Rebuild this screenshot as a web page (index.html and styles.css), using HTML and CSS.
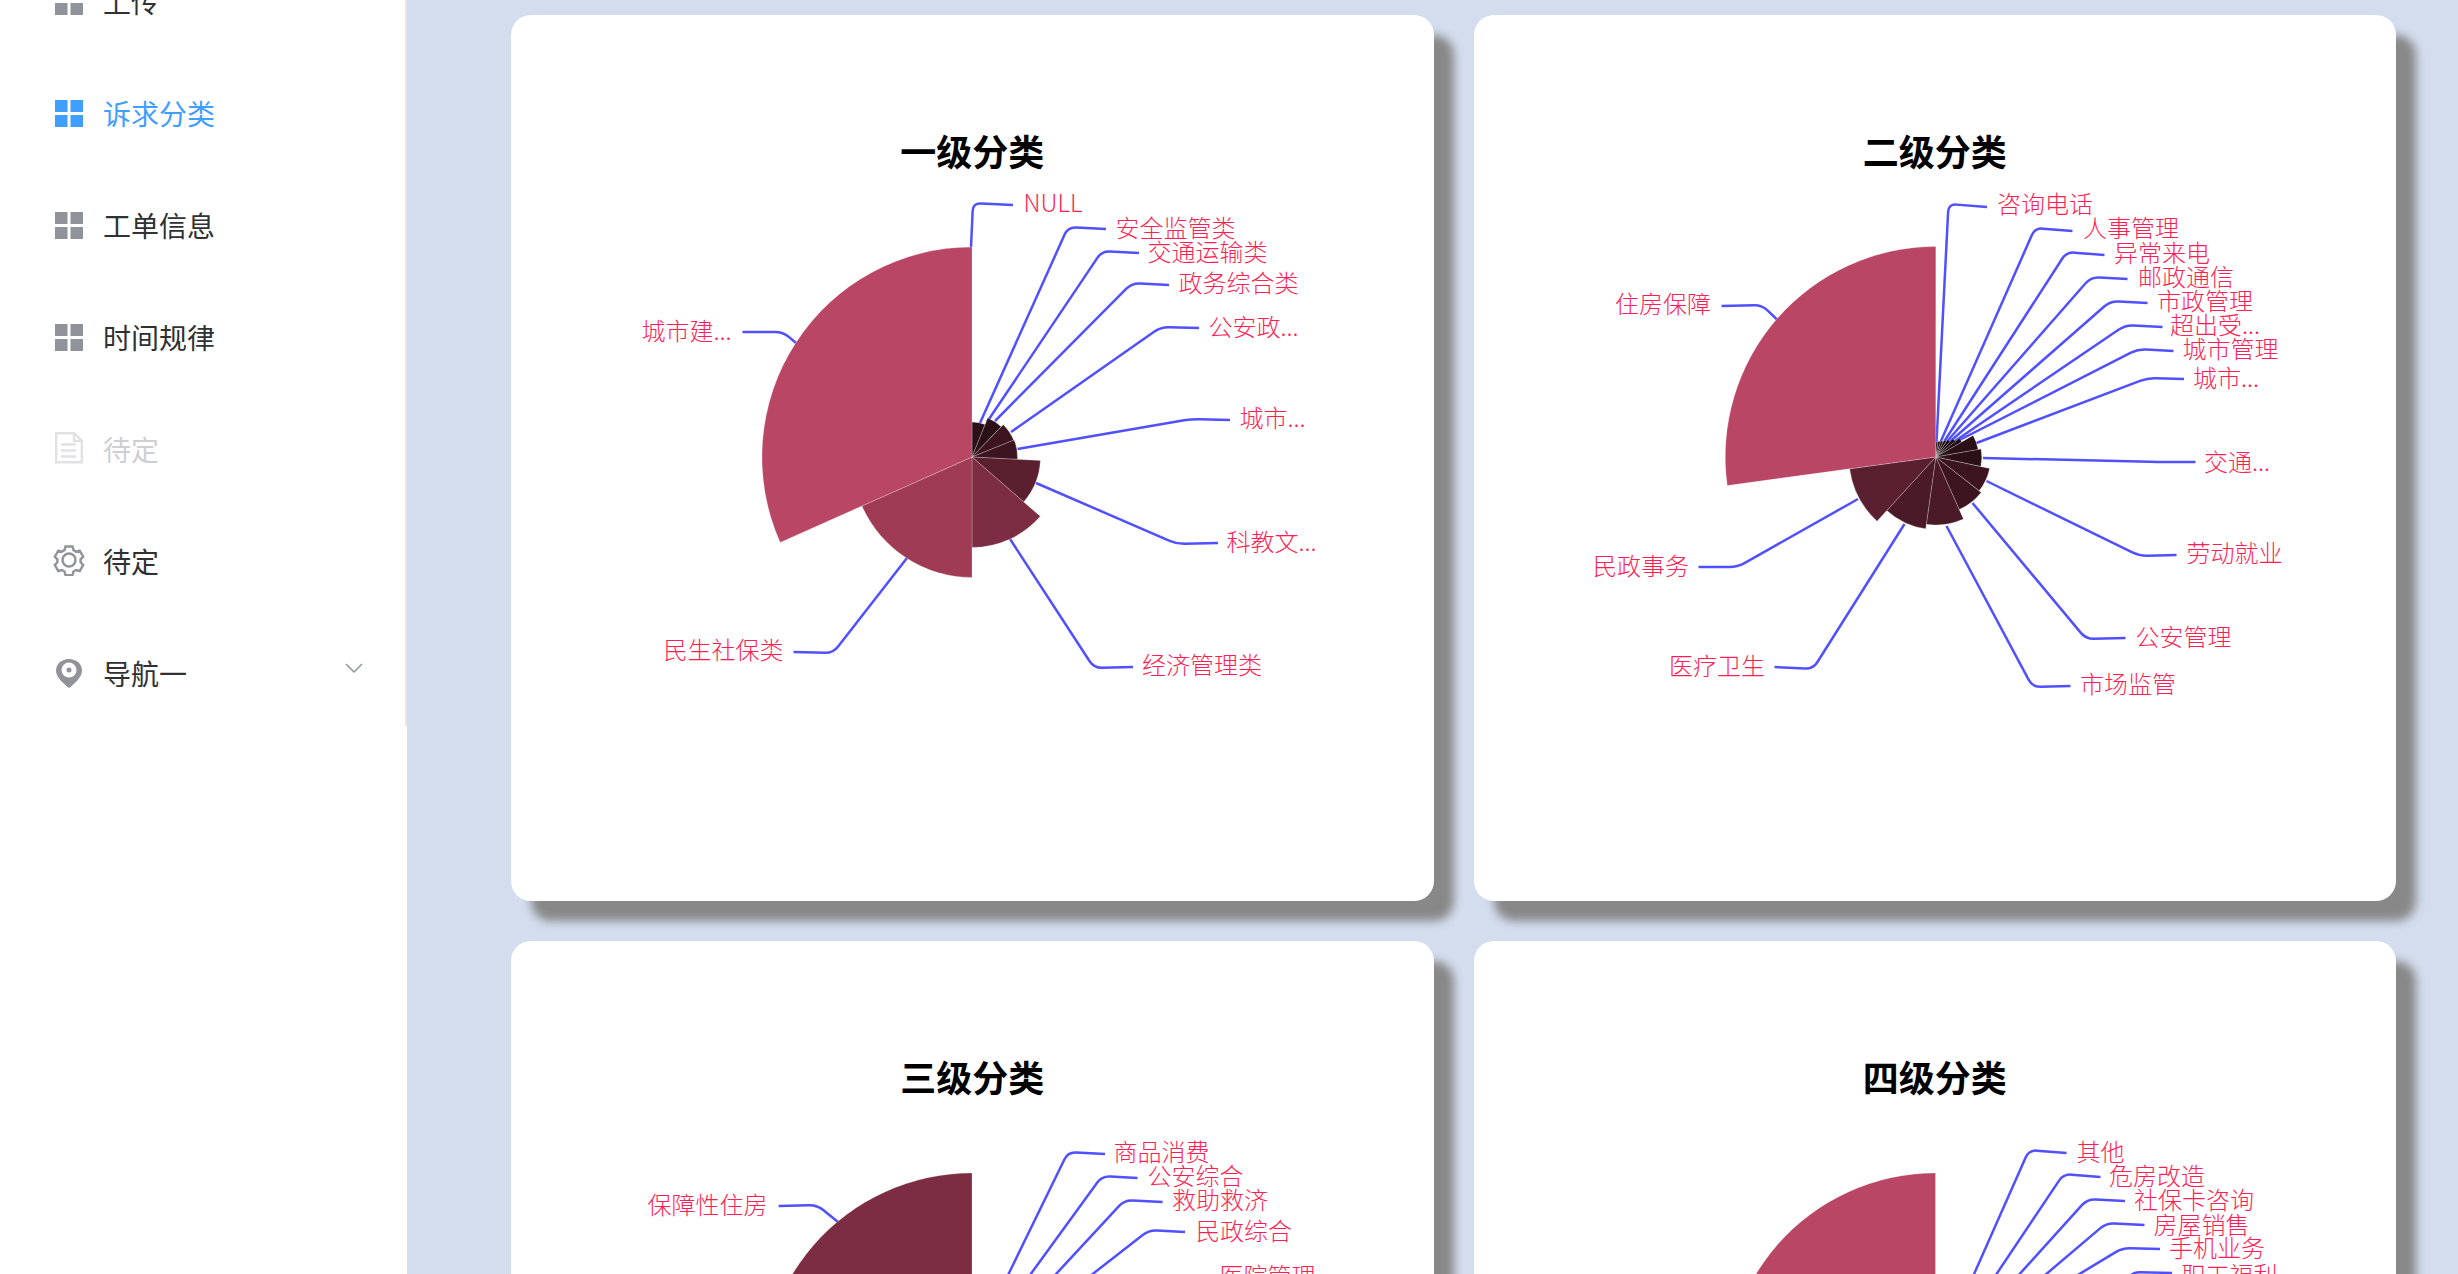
FILE: index.html
```html
<!DOCTYPE html>
<html>
  <head>
    <meta charset="utf-8">
    <title>诉求分类</title>
    <link rel="stylesheet" href="styles.css">
  </head>

  <body>

    <!--Side menu-->
    <aside class="aside">
      <ul class="menu">
        <li class="menuItem">
          <svg class="menuIcon" viewBox="0 0 28 28"><path d="M0 1h12.500v12h-12.500zM15.500 1h12.500v12h-12.500zM0 16h12.500v12h-12.500zM15.500 16h12.500v12h-12.500z"/></svg>
          <span>上传</span>
        </li>
        <li class="menuItem active">
          <svg class="menuIcon" viewBox="0 0 28 28"><path d="M0 1h12.500v12h-12.500zM15.500 1h12.500v12h-12.500zM0 16h12.500v12h-12.500zM15.500 16h12.500v12h-12.500z"/></svg>
          <span>诉求分类</span>
        </li>
        <li class="menuItem">
          <svg class="menuIcon" viewBox="0 0 28 28"><path d="M0 1h12.500v12h-12.500zM15.500 1h12.500v12h-12.500zM0 16h12.500v12h-12.500zM15.500 16h12.500v12h-12.500z"/></svg>
          <span>工单信息</span>
        </li>
        <li class="menuItem">
          <svg class="menuIcon" viewBox="0 0 28 28"><path d="M0 1h12.500v12h-12.500zM15.500 1h12.500v12h-12.500zM0 16h12.500v12h-12.500zM15.500 16h12.500v12h-12.500z"/></svg>
          <span>时间规律</span>
        </li>
        <li class="menuItem disabled">
          <svg class="menuIcon tall" viewBox="0 0 28 32"><path class="line" d="M1.200 1.200h18l7.600 7.600v21.500h-25.600zM19 1.200v7.800h7.800M6 12.500h15M6 18.500h15M6 24.500h15"/></svg>
          <span>待定</span>
        </li>
        <li class="menuItem">
          <svg class="menuIcon gear" viewBox="0 0 32 32"><path class="line" d="M12.500 2.500h7l1 3.600 2.600 1.500 3.600-1 3.500 6.100-2.600 2.600v3l2.600 2.600-3.500 6.100-3.600-1-2.600 1.500-1 3.600h-7l-1-3.600-2.600-1.500-3.600 1-3.500-6.100 2.600-2.600v-3l-2.600-2.600 3.500-6.100 3.600 1 2.600-1.500z"/><circle class="line" cx="16" cy="16" r="6.500"/></svg>
          <span>待定</span>
        </li>
        <li class="menuItem">
          <svg class="menuIcon pin" viewBox="0 0 28 32"><path d="M14 0C21.500 0 27 5 27 11.500 27 18.500 19 25 14 29 9 25 1 18.500 1 11.500 1 5 6.500 0 14 0z"/><circle class="hole" cx="14" cy="11" r="7.500"/><circle cx="14" cy="11" r="2.500"/></svg>
          <span>导航一</span>
          <svg class="chevron" viewBox="0 0 18 10"><path d="M1 1l8 8 8-8"/></svg>
        </li>
      </ul>
    </aside>
    <!---->

    <main class="main">
      <section class="card">
        <h3 class="cardTitle">一级分类</h3>
        <svg class="chart" id="chart1"></svg>
      </section>
      <section class="card">
        <h3 class="cardTitle">二级分类</h3>
        <svg class="chart" id="chart2"></svg>
      </section>
      <section class="card">
        <h3 class="cardTitle">三级分类</h3>
        <svg class="chart" id="chart3"></svg>
      </section>
      <section class="card">
        <h3 class="cardTitle">四级分类</h3>
        <svg class="chart" id="chart4"></svg>
      </section>
    </main>

    <script src="charts.js"></script>

  </body>

</html>
```

FILE: styles.css
```css
html,body{
  height: 100%;
  width: 100%;
  overflow: hidden;
  margin: 0px;
  padding: 0px;
}

body{
  display: flex;
  align-items: flex-start;
  font-family: "Noto Sans CJK SC", "Liberation Sans", sans-serif;
  background-color: #D3DDEE;
}

.aside{
  flex: 0 0 407px;
  height: 100%;
  background-color: #FFF;
}

.menu{
  list-style: none;
  margin: -55px 0px 0px 0px;
  padding: 0px;
  height: 781px;
  box-sizing: border-box;
  border-right: solid 2px #E6E6E6;
}

.menuItem{
  display: flex;
  align-items: center;
  height: 112px;
  padding-left: 55px;
  padding-right: 42px;
  font-size: 28px;
  color: #303133;
  fill: #909399;
  stroke: #909399;
}

.menuItem span{
  margin-left: 20px;
}

.menuIcon{
  flex: 0 0 28px;
  width: 28px;
  height: 28px;
  stroke: none;
}

.line{
  fill: none;
  stroke: #909399;
  stroke-width: 2.400px;
}

.hole{
  fill: #FFF;
}

.tall{
  height: 32px;
  margin-bottom: 2px;
}

.pin{
  height: 32px;
  margin-top: 3px;
}

.gear{
  flex-basis: 32px;
  width: 32px;
  height: 32px;
  margin-left: -2px;
  margin-right: -2px;
  margin-bottom: 2px;
}

.chevron{
  width: 18px;
  height: 10px;
  margin-left: auto;
  margin-bottom: 11px;
  fill: none;
  stroke-width: 1.500px;
}

.active{
  color: #409EFF;
  fill: #409EFF;
}

.disabled{
  color: #CFCFD1;
}

.disabled .line{
  stroke: #E2E2E4;
}

.main{
  flex: 1;
  display: grid;
  grid-template-columns: 1fr 1fr;
  gap: 40px;
  padding: 15px 62px 0px 104px;
}

.card{
  height: 886px;
  background-color: #FFF;
  border-radius: 20px;
  box-shadow: 20px 20px 10px #888;
}

.cardTitle{
  margin: 0px;
  padding-top: 110px;
  padding-bottom: 2px;
  height: 50px;
  line-height: 50px;
  font-size: 36px;
  font-weight: 700;
  text-align: center;
  color: #000;
}

.chart{
  display: block;
  width: 100%;
  height: 724px;
  overflow: visible;
}

.chart text{
  font-size: 24px;
  font-weight: 300;
  fill: #FF1F55;
}

.chart .labelLine{
  fill: none;
  stroke: #5050FF;
  stroke-width: 2.500px;
}

.chart .slice{
  stroke: rgba(255,255,255,0.3);
  stroke-width: 0.8px;
}
```

FILE: charts.js
```js
// rose charts, all coordinates in page pixels (viewBox is moved to the card)
var NS = "http://www.w3.org/2000/svg";

var COLORS = {
  a: "#BA4666", b: "#A03B55", c: "#7C2D41", d: "#5A2030",
  e: "#4A1A28", f: "#3C1520", g: "#2C1018", h: "#1C0A0F"
};

var CHARTS = [
  {
    id: "chart1", ox: 511, oy: 177, cx: 972, cy: 457,
    // from angle, to angle, radius, color
    slices: [
      [0, 22, 35, "g"], [22, 44, 42, "g"], [44, 68, 45, "f"], [68, 93, 45.500, "f"],
      [93, 131, 68.500, "d"], [131, 180, 90.500, "c"], [180, 246, 120.500, "b"], [246, 360, 210, "a"]
    ],
    // text, text x, text y, then line: start, elbow, end
    labels: [
      ["NULL", 1025, 203, 971, 247, 973, 203, 1013, 205],
      ["安全监管类", 1117, 228, 980, 423, 1068, 227, 1106, 229],
      ["交通运输类", 1149, 252, 987, 422, 1102, 251, 1139, 253],
      ["政务综合类", 1180, 283, 995, 421, 1132, 283, 1169, 285],
      ["公安政...", 1210, 327, 1011, 432, 1161, 327, 1199, 328],
      ["城市...", 1241, 418, 1017.500, 449, 1192, 419, 1230, 420],
      ["科教文...", 1228, 542, 1036, 483, 1177, 544, 1218, 543],
      ["经济管理类", 1143.500, 665.500, 1010, 539, 1094, 668, 1133, 667],
      ["民生社保类", 665, 650, 907, 558, 833, 653, 793.500, 652],
      ["城市建...", 643, 331, 796, 343, 783, 332, 742.500, 332]
    ]
  },
  {
    id: "chart2", ox: 1473.500, oy: 177, cx: 1935.300, cy: 457,
    slices: [
      [0, 8.600, 15, "h"], [8.600, 17.200, 16, "h"], [17.200, 25.800, 17, "h"], [25.800, 34.400, 19, "h"],
      [34.400, 43, 21, "h"], [43, 51.600, 25, "h"], [51.600, 60, 30, "h"], [60, 80, 43, "g"],
      [80, 102, 46, "g"], [102, 128, 55, "f"], [128, 156, 57.500, "f"], [156, 188, 68, "e"],
      [188, 222.500, 72.500, "e"], [222.500, 262.200, 87, "d"], [262.200, 360, 210.500, "a"]
    ],
    labels: [
      ["咨询电话", 1998, 204, 1936, 442, 1948, 204, 1986.500, 207],
      ["人事管理", 2084, 228, 1940, 442, 2034.500, 228, 2072, 231],
      ["异常来电", 2115, 253, 1944, 441, 2066, 252, 2104, 255],
      ["邮政通信", 2139, 277, 1946, 442, 2090.600, 277, 2127, 279],
      ["市政管理", 2158, 301, 1949, 442, 2110, 301, 2147, 303],
      ["超出受...", 2171, 325, 1953, 442, 2125, 325, 2162, 327],
      ["城市管理", 2183.500, 349, 1957, 441, 2137.600, 349, 2173, 351],
      ["城市...", 2194, 378, 1976, 443, 2147, 378, 2183.500, 379],
      ["交通...", 2205, 462, 1982.500, 458, 2157, 462, 2195, 462],
      ["劳动就业", 2187.500, 553, 1986, 481, 2139, 556, 2176, 555],
      ["公安管理", 2136.500, 637.500, 1972, 503, 2085.500, 639, 2125, 638],
      ["市场监管", 2081, 684.500, 1946, 526, 2032, 687, 2070, 686],
      ["医疗卫生", 1670, 666.500, 1904, 524, 1812.500, 669, 1774, 667],
      ["民政事务", 1594, 566, 1857.500, 499, 1737, 567, 1698, 567],
      ["住房保障", 1616, 304, 1777, 320, 1761.500, 305, 1721, 306]
    ]
  },
  {
    id: "chart3", ox: 511, oy: 1103, cx: 972, cy: 1383,
    slices: [[262, 360, 210, "c"]],
    labels: [
      ["商品消费", 1115, 1152, 1005.600, 1280, 1068, 1152, 1105, 1154],
      ["公安综合", 1149, 1176, 1026.400, 1280, 1102, 1176, 1137.500, 1178],
      ["救助救济", 1173.600, 1200.500, 1050.500, 1280, 1124.600, 1200, 1162.600, 1202],
      ["民政综合", 1197.500, 1231, 1085, 1280, 1149, 1230, 1185, 1232],
      ["医院管理", 1221, 1276, 1100, 1340, 1170, 1278, 1210, 1280],
      ["保障性住房", 649, 1205, 838, 1222, 817, 1205, 778.600, 1206]
    ]
  },
  {
    id: "chart4", ox: 1473.500, oy: 1103, cx: 1935, cy: 1383,
    slices: [[262, 360, 210, "a"]],
    labels: [
      ["其他", 2077.500, 1152, 1970.900, 1280, 2028.500, 1150, 2066, 1153],
      ["危房改造", 2110, 1176, 1992, 1280, 2063, 1174, 2100, 1177],
      ["社保卡咨询", 2135, 1200.500, 2013.700, 1280, 2087, 1199, 2124.500, 1201],
      ["房屋销售", 2154.500, 1225, 2038.700, 1280, 2106, 1223, 2144, 1225],
      ["手机业务", 2170, 1248, 2069, 1280, 2122, 1248, 2159.500, 1249],
      ["职工福利", 2182.500, 1275, 2120, 1290, 2131.500, 1272, 2171.600, 1273]
    ]
  }
];

function make(parent, tag, attrs) {
  var el = document.createElementNS(NS, tag);
  for (var k in attrs) el.setAttribute(k, attrs[k]);
  parent.appendChild(el);
  return el;
}

function slicePath(c, from, to, r) {
  var a = from * Math.PI / 180, b = to * Math.PI / 180;
  var x1 = c.cx + r * Math.sin(a), y1 = c.cy - r * Math.cos(a);
  var x2 = c.cx + r * Math.sin(b), y2 = c.cy - r * Math.cos(b);
  var big = to - from > 180 ? 1 : 0;
  return "M" + c.cx + " " + c.cy + "L" + x1 + " " + y1 + "A" + r + " " + r + " 0 " + big + " 1 " + x2 + " " + y2 + "Z";
}

// line with a small round bend at the elbow, like a smoothed label line
function linePath(l) {
  var sx = l[3], sy = l[4], ex = l[5], ey = l[6], tx = l[7], ty = l[8];
  var d1 = Math.hypot(sx - ex, sy - ey), d2 = Math.hypot(tx - ex, ty - ey);
  var ax = ex + (sx - ex) * 8 / d1, ay = ey + (sy - ey) * 8 / d1;
  var bx = ex + (tx - ex) * 8 / d2, by = ey + (ty - ey) * 8 / d2;
  return "M" + sx + " " + sy + "L" + ax + " " + ay + "Q" + ex + " " + ey + " " + bx + " " + by + "L" + tx + " " + ty;
}

CHARTS.forEach(function (c) {
  var svg = document.getElementById(c.id);
  svg.setAttribute("viewBox", c.ox + " " + c.oy + " 922.500 724");
  c.labels.forEach(function (l) {
    make(svg, "path", { "class": "labelLine", d: linePath(l) });
  });
  c.slices.forEach(function (s) {
    make(svg, "path", { "class": "slice", d: slicePath(c, s[0], s[1], s[2]), fill: COLORS[s[3]] });
  });
  c.labels.forEach(function (l) {
    var t = make(svg, "text", { x: l[1] - 1.500, y: l[2] + 8.500 });
    t.textContent = l[0];
  });
});
```
